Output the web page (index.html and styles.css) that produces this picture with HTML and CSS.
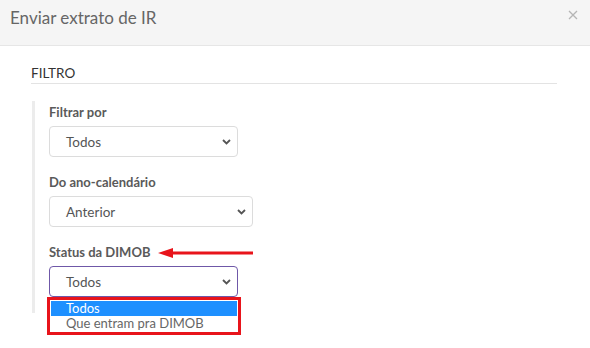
FILE: index.html
```html
<!DOCTYPE html>
<html lang="pt-BR">
<head>
    <meta charset="UTF-8">
    <meta name="viewport" content="width=device-width, initial-scale=1.0">
    <title>Enviar extrato de IR</title>
    <link rel="stylesheet" href="styles.css">
</head>
<body>

    <div class="modal">
        <!-- Cabeçalho -->
        <div class="modal-header">
            <h4 class="modal-title">Enviar extrato de IR</h4>
            <span class="close">
                <svg width="10" height="10" viewBox="0 0 10 10"><path d="M1 1L9 9M9 1L1 9" stroke="#b5b5b5" stroke-width="1.3"/></svg>
            </span>
        </div>

        <div class="modal-body">
            <div class="section-title">FILTRO</div>

            <div class="filter-group">
                <label class="field-label">Filtrar por</label>
                <div class="fake-select w-sm">
                    <span>Todos</span>
                    <svg class="chevron" width="9" height="6" viewBox="0 0 9 6"><path d="M1 1L4.5 4.5L8 1" fill="none" stroke="#555" stroke-width="1.8"/></svg>
                </div>

                <label class="field-label">Do ano-calendário</label>
                <div class="fake-select w-md">
                    <span>Anterior</span>
                    <svg class="chevron" width="9" height="6" viewBox="0 0 9 6"><path d="M1 1L4.5 4.5L8 1" fill="none" stroke="#555" stroke-width="1.8"/></svg>
                </div>

                <div class="status-row">
                    <label class="field-label">Status da DIMOB</label>
                    <!-- seta de destaque -->
                    <svg class="arrow" width="96" height="12" viewBox="0 0 96 12"><path d="M14 6H95" stroke="#e8141b" stroke-width="3"/><path d="M0 6L15 1V11Z" fill="#e8141b"/></svg>
                </div>
                <div class="select-wrap">
                    <div class="fake-select w-sm active">
                        <span>Todos</span>
                        <svg class="chevron" width="9" height="6" viewBox="0 0 9 6"><path d="M1 1L4.5 4.5L8 1" fill="none" stroke="#555" stroke-width="1.8"/></svg>
                    </div>
                    <ul class="dropdown">
                        <li class="selected">Todos</li>
                        <li>Que entram pra DIMOB</li>
                    </ul>
                </div>
            </div>
        </div>
    </div>

</body>
</html>
```

FILE: styles.css
```css
body {
    font-family: Lato, "Open Sans", sans-serif;
    margin: 0;
    padding: 0;
    background-color: #fff;
    color: #555;
}
.modal {
    width: 590px;
    height: 348px;
    overflow: hidden;
}
.modal-header {
    height: 46px;
    background-color: #f5f5f5;
    border-bottom: 1px solid #e6e6e6;
    display: flex;
    align-items: flex-start;
    justify-content: space-between;
    padding: 0 12px 0 10px;
    box-sizing: border-box;
}
.modal-title {
    margin: 0;
    font-size: 17px;
    font-weight: 400;
    line-height: 20px;
    padding-top: 8px;
    color: #666;
}
.close {
    padding-top: 10px;
    line-height: 0;
}
.modal-body {
    padding: 19px 33px 0 31px;
}
.section-title {
    font-size: 13.5px;
    color: #333;
    line-height: 17px;
    padding-bottom: 1px;
    border-bottom: 1px solid #e3e3e3;
}
.filter-group {
    margin-top: 17px;
    margin-left: 1px;
    border-left: 3px solid #ececec;
    padding: 2px 0 16px 14px;
    width: 240px;
}
.field-label {
    display: block;
    font-size: 13px;
    font-weight: 700;
    line-height: 18px;
    color: #5a5a5a;
    margin-bottom: 5px;
}
.fake-select {
    height: 31px;
    box-sizing: border-box;
    border: 1px solid #dcdcdc;
    border-radius: 4px;
    display: flex;
    align-items: center;
    justify-content: space-between;
    padding: 0 6px 0 16px;
    font-size: 13.5px;
    color: #555;
    margin-bottom: 16px;
    background-color: #fff;
}
.fake-select .chevron {
    margin-top: 1px;
}
.w-sm {
    width: 189px;
}
.w-md {
    width: 204px;
}
.status-row {
    display: flex;
    align-items: center;
    gap: 8px;
}
.arrow {
    margin-bottom: 3px;
}
.select-wrap {
    position: relative;
}
.fake-select.active {
    border-color: #6f58a8;
    margin-bottom: 0;
}
.dropdown {
    position: absolute;
    top: 31px;
    left: -2px;
    width: 194px;
    box-sizing: border-box;
    margin: 0;
    padding: 1px;
    list-style: none;
    border: 3px solid #e8141b;
    background-color: #fff;
    font-size: 13px;
    line-height: 15px;
}
.dropdown li {
    padding-left: 15px;
    color: #666;
}
.dropdown li.selected {
    background-color: #1e90ff;
    color: #fff;
}
```
